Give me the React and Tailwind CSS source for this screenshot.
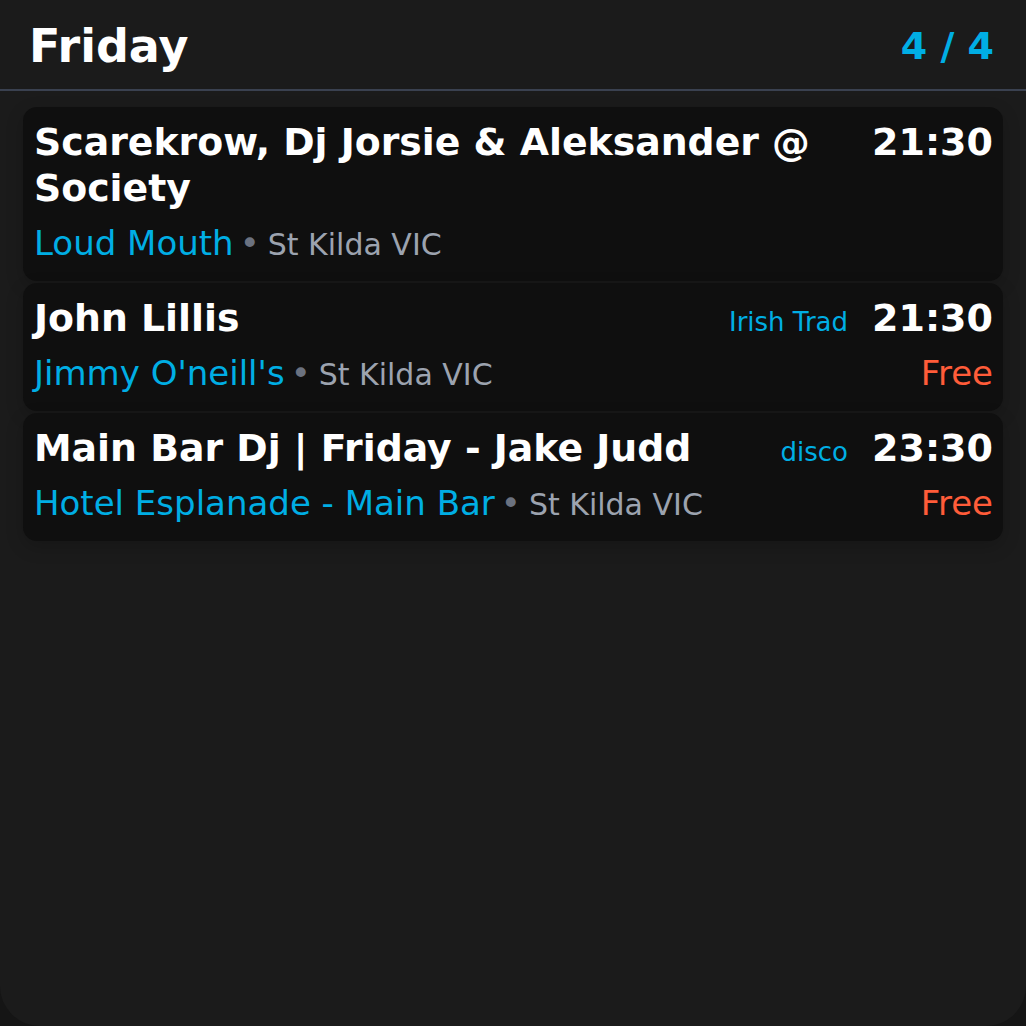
const EVENTS = [
  {
    id: 1,
    title: 'Scarekrow, Dj Jorsie & Aleksander @ Society',
    venue: 'Loud Mouth',
    suburb: 'St Kilda VIC',
    time: '21:30',
  },
  {
    id: 2,
    title: 'John Lillis',
    venue: "Jimmy O'neill's",
    suburb: 'St Kilda VIC',
    genre: 'Irish Trad',
    time: '21:30',
    price: 'Free',
  },
  {
    id: 3,
    title: 'Main Bar Dj | Friday - Jake Judd',
    venue: 'Hotel Esplanade - Main Bar',
    suburb: 'St Kilda VIC',
    genre: 'disco',
    time: '23:30',
    price: 'Free',
  },
];

function EventCard({ ev }) {
  return (
    <div className="rounded-[14px] bg-[#0f0f0f] pl-[11px] pr-[10px] pt-3 pb-[17px] shadow-[0_6px_18px_rgba(0,0,0,0.18)]">
      <div className="flex items-baseline">
        <h2 className="flex-1 min-w-0 pr-6 text-[37.8px] leading-[46px] font-bold text-white">{ev.title}</h2>
        {ev.genre && <span className="mr-6 text-[26px] leading-[30px] text-[#00aee4]">{ev.genre}</span>}
        <span className="text-[38px] leading-[46px] font-bold text-white">{ev.time}</span>
      </div>
      <div className="mt-[11px] flex items-baseline text-[34px] leading-[42px]">
        <div className="flex-1 min-w-0">
          <span className="text-[#00aee4]">{ev.venue}</span>
          <span className="ml-[6px] mr-[8px] text-[#6b7280]">•</span>
          <span className="text-[30px] leading-[30px] text-[#9ca3af]">{ev.suburb}</span>
        </div>
        {ev.price && <span className="text-[#ff5c39]">{ev.price}</span>}
      </div>
    </div>
  );
}

export default function App() {
  return (
    <div className="min-h-screen bg-[#151515] font-['DejaVu_Sans',sans-serif]">
      <div className="h-[1026px] rounded-b-[40px] bg-[#1b1b1b]">
        {/* Day header */}
        <div className="flex items-center justify-between border-b-2 border-[#3a4150] pl-[29px] pr-8 pt-5 pb-[17px]">
          <h1 className="text-[46px] leading-[52px] font-bold text-white">Friday</h1>
          <span className="text-[38px] leading-[46px] font-bold text-[#00aee4]">4 / 4</span>
        </div>

        {/* Event list */}
        <div className="mx-[23px] mt-[16px] space-y-[2px]">
          {EVENTS.map((ev) => (
            <EventCard key={ev.id} ev={ev} />
          ))}
        </div>
      </div>
    </div>
  );
}
